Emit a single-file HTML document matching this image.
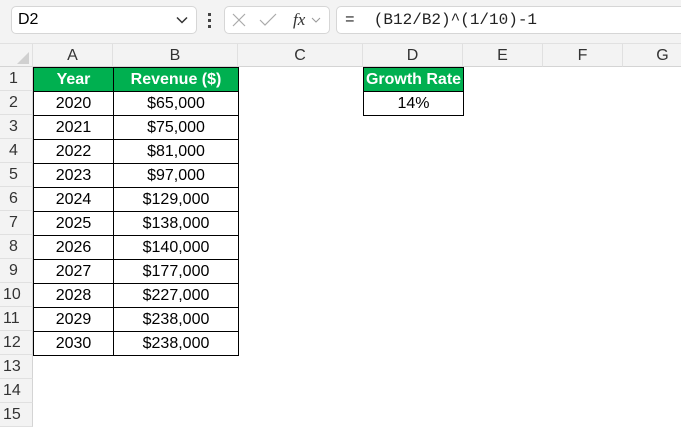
<!DOCTYPE html>
<html><head><style>
*{margin:0;padding:0;box-sizing:border-box}
body{width:681px;height:427px;overflow:hidden;background:#fff;font-family:"Liberation Sans",sans-serif;position:relative}
.top{position:absolute;left:0;top:0;width:681px;height:44px;background:#f3f3f3;border-bottom:1px solid #e1e1e1}
.box{position:absolute;background:#fff;border:1px solid #d6d6d6;border-radius:5px}
.hdr{position:absolute;top:44px;height:23px;background:#f3f3f3;border-bottom:1px solid #d4d4d4;border-right:1px solid #e0e0e0;color:#333;font-size:16px;text-align:center;line-height:23px}
.rh{position:absolute;left:0;width:33px;height:24px;background:#f3f3f3;border-right:1px solid #d4d4d4;border-bottom:1px solid #e0e0e0;color:#333;font-size:16px;line-height:24px;padding-left:9px}
.c{position:absolute;height:24px;font-size:16px;line-height:24px;text-align:center;border:1px solid #000;color:#000}
.g{background:#00b050;color:#fff;font-weight:bold}
</style></head><body>
<div class="top"></div>
<div class="box" style="left:11px;top:6px;width:186px;height:28px;font-size:16px;line-height:26px;padding-left:6px">D2
<svg style="position:absolute;right:8px;top:9px" width="12" height="8"><path d="M1 1.5L6 6.5 11 1.5" stroke="#333" stroke-width="1.5" fill="none"/></svg></div>
<div style="position:absolute;left:208px;top:13px;width:3px;height:3px;background:#444"></div>
<div style="position:absolute;left:208px;top:19px;width:3px;height:3px;background:#444"></div>
<div style="position:absolute;left:208px;top:25px;width:3px;height:3px;background:#444"></div>
<div class="box" style="left:224px;top:6px;width:106px;height:28px">
<svg width="104" height="26" style="position:absolute;left:0;top:0"><path d="M8 7L20 19M20 7L8 19" stroke="#aaa" stroke-width="1.2"/><path d="M35 13L40 18 51 7" stroke="#aaa" stroke-width="1.2" fill="none"/><text x="68" y="18" font-family="Liberation Serif" font-style="italic" font-size="17" fill="#333">fx</text><path d="M87 11L91 15 95 11" stroke="#999" stroke-width="1" fill="none"/></svg></div>
<div class="box" style="left:336px;top:6px;width:350px;height:28px;font-family:'Liberation Mono',monospace;font-size:16px;line-height:26px;padding-left:8px;color:#222">=&nbsp;&nbsp;(B12/B2)^(1/10)-1</div>
<div class="hdr" style="left:0;width:33px"><svg width="33" height="23"><path d="M29 8L29 20 17 20Z" fill="#d0d0d0"/></svg></div>
<div class="hdr" style="left:33px;width:80px">A</div>
<div class="hdr" style="left:113px;width:125px">B</div>
<div class="hdr" style="left:238px;width:125px">C</div>
<div class="hdr" style="left:363px;width:100px">D</div>
<div class="hdr" style="left:463px;width:80px">E</div>
<div class="hdr" style="left:543px;width:80px">F</div>
<div class="hdr" style="left:623px;width:80px">G</div>
<div class="rh" style="top:67px">1</div><div class="rh" style="top:91px">2</div><div class="rh" style="top:115px">3</div><div class="rh" style="top:139px">4</div><div class="rh" style="top:163px">5</div><div class="rh" style="top:187px">6</div><div class="rh" style="top:211px">7</div><div class="rh" style="top:235px">8</div><div class="rh" style="top:259px">9</div><div class="rh" style="top:283px;padding-left:3px">10</div><div class="rh" style="top:307px;padding-left:3px">11</div><div class="rh" style="top:331px;padding-left:3px">12</div><div class="rh" style="top:355px;padding-left:3px">13</div><div class="rh" style="top:379px;padding-left:3px">14</div><div class="rh" style="top:403px;padding-left:3px">15</div>
<div class="c g" style="left:33px;top:67px;width:81px;height:25px">Year</div>
<div class="c g" style="left:113px;top:67px;width:126px;height:25px">Revenue ($)</div>
<div class="c g" style="left:363px;top:67px;width:101px;height:25px">Growth Rate</div>
<div class="c" style="left:363px;top:91px;width:101px;height:25px">14%</div>
<div id="t"></div>
<script>
var d=[["2020","$65,000"],["2021","$75,000"],["2022","$81,000"],["2023","$97,000"],["2024","$129,000"],["2025","$138,000"],["2026","$140,000"],["2027","$177,000"],["2028","$227,000"],["2029","$238,000"],["2030","$238,000"]];
var h="";d.forEach(function(r,i){var y=91+i*24;h+='<div class="c" style="left:33px;top:'+y+'px;width:81px;height:25px">'+r[0]+'</div><div class="c" style="left:113px;top:'+y+'px;width:126px;height:25px">'+r[1]+'</div>';});
document.getElementById("t").innerHTML=h;
</script>
</body></html>
